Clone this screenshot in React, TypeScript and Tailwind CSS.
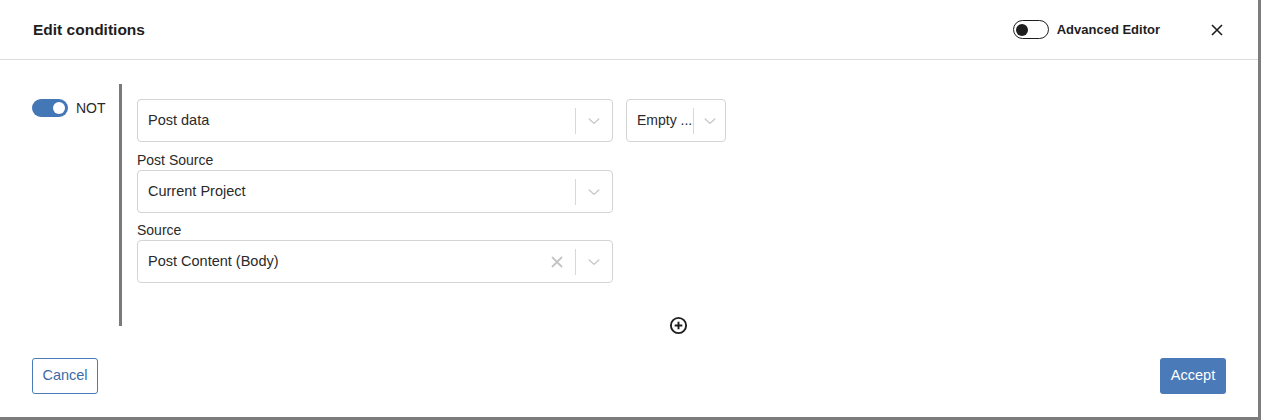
import React from "react";

const ChevronDown = () => (
  <svg width="16" height="16" viewBox="0 0 20 20" fill="none" stroke="#c6c6c6" strokeWidth="1.6">
    <path d="M4 7.5l6 5.5 6-5.5" strokeLinecap="round" strokeLinejoin="round" />
  </svg>
);

const ClearIcon = () => (
  <svg width="12" height="12" viewBox="0 0 12 12" stroke="#c4c4c4" strokeWidth="1.8">
    <path d="M1.5 1.5l9 9M10.5 1.5l-9 9" strokeLinecap="round" />
  </svg>
);

type SelectProps = { value: string; clearable?: boolean };

const Select = ({ value, clearable }: SelectProps) => (
  <div className="h-[43px] w-[476px] shrink-0 flex items-center border border-[#d4d4d4] rounded-[4px] bg-white">
    <div className="flex-1 pl-[10px] text-[14.5px] text-[#2a2a2a] truncate">{value}</div>
    {clearable && (
      <div className="px-[12px] flex items-center">
        <ClearIcon />
      </div>
    )}
    <div className="w-px h-[26px] bg-[#d8d8d8]" />
    <div className="w-[36px] flex items-center justify-center">
      <ChevronDown />
    </div>
  </div>
);

const App = () => {
  return (
    <div
      className="w-[1261px] h-[420px] bg-[#7d7d7d] overflow-hidden"
      style={{ fontFamily: "'Liberation Sans', Arial, sans-serif" }}
    >
      <div className="w-[1258px] h-[417px] bg-white flex flex-col">
        {/* header */}
        <div className="h-[60px] shrink-0 border-b border-[#dcdcdc] flex items-center pl-[33px] pr-[35px]">
          <div className="text-[15.5px] font-bold text-[#1e1e1e] flex-1">Edit conditions</div>
          <div className="flex items-center">
            <div className="w-[36px] h-[19px] rounded-full border-[1.5px] border-[#1e1e1e] flex items-center px-[2px]">
              <div className="w-[12px] h-[12px] rounded-full bg-[#1e1e1e]" />
            </div>
            <span className="ml-[8px] text-[13px] font-bold text-[#1e1e1e]">Advanced Editor</span>
            <svg className="ml-[51px]" width="12" height="12" viewBox="0 0 12 12" stroke="#1e1e1e" strokeWidth="1.6">
              <path d="M1 1l10 10M11 1L1 11" />
            </svg>
          </div>
        </div>

        {/* body */}
        <div className="flex pl-[32px] pt-[24px] flex-1 min-h-0">
          <div className="flex items-start pt-[15px] w-[87px]">
            <div className="w-[36px] h-[18px] rounded-full bg-[#4477b6] flex items-center justify-end px-[3px]">
              <div className="w-[12px] h-[12px] rounded-full bg-white" />
            </div>
            <span className="ml-[8px] text-[14px] text-[#2a2a2a] leading-[18px]">NOT</span>
          </div>
          <div className="w-[3px] h-[242px] bg-[#7a7a7a]" />
          <div className="pl-[15px] pt-[15px] flex flex-col">
            <div className="flex gap-[13px]">
              <Select value="Post data" />
              <div className="h-[43px] w-[100px] flex items-center border border-[#d4d4d4] rounded-[4px]">
                <span className="pl-[10px] text-[14px] text-[#2a2a2a] whitespace-nowrap">Empty ...</span>
                <div className="w-px h-[26px] bg-[#d8d8d8] ml-[1px]" />
                <div className="flex-1 flex items-center justify-center">
                  <ChevronDown />
                </div>
              </div>
            </div>
            <div className="mt-[10px] text-[14px] text-[#2a2a2a] leading-[17px]">Post Source</div>
            <div className="mt-[1px]">
              <Select value="Current Project" />
            </div>
            <div className="mt-[9px] text-[14px] text-[#2a2a2a] leading-[17px]">Source</div>
            <div className="mt-[1px]">
              <Select value="Post Content (Body)" clearable />
            </div>
            <div className="ml-[532px] mt-[33px]">
              <svg width="19" height="19" viewBox="0 0 20 20" fill="none" stroke="#1e1e1e" strokeWidth="2">
                <circle cx="10" cy="10" r="8" />
                <path d="M10 6v8M6 10h8" />
              </svg>
            </div>
          </div>
        </div>

        {/* footer */}
        <div className="flex justify-between items-end px-[32px] pb-[23px]">
          <button className="h-[36px] w-[66px] border border-[#4a7ab7] rounded-[3px] text-[14.5px] text-[#3c6ca8] bg-white">
            Cancel
          </button>
          <button className="h-[36px] w-[66px] rounded-[3px] text-[14.5px] text-white bg-[#4a7ab7]">
            Accept
          </button>
        </div>
      </div>
    </div>
  );
};

export default App;
